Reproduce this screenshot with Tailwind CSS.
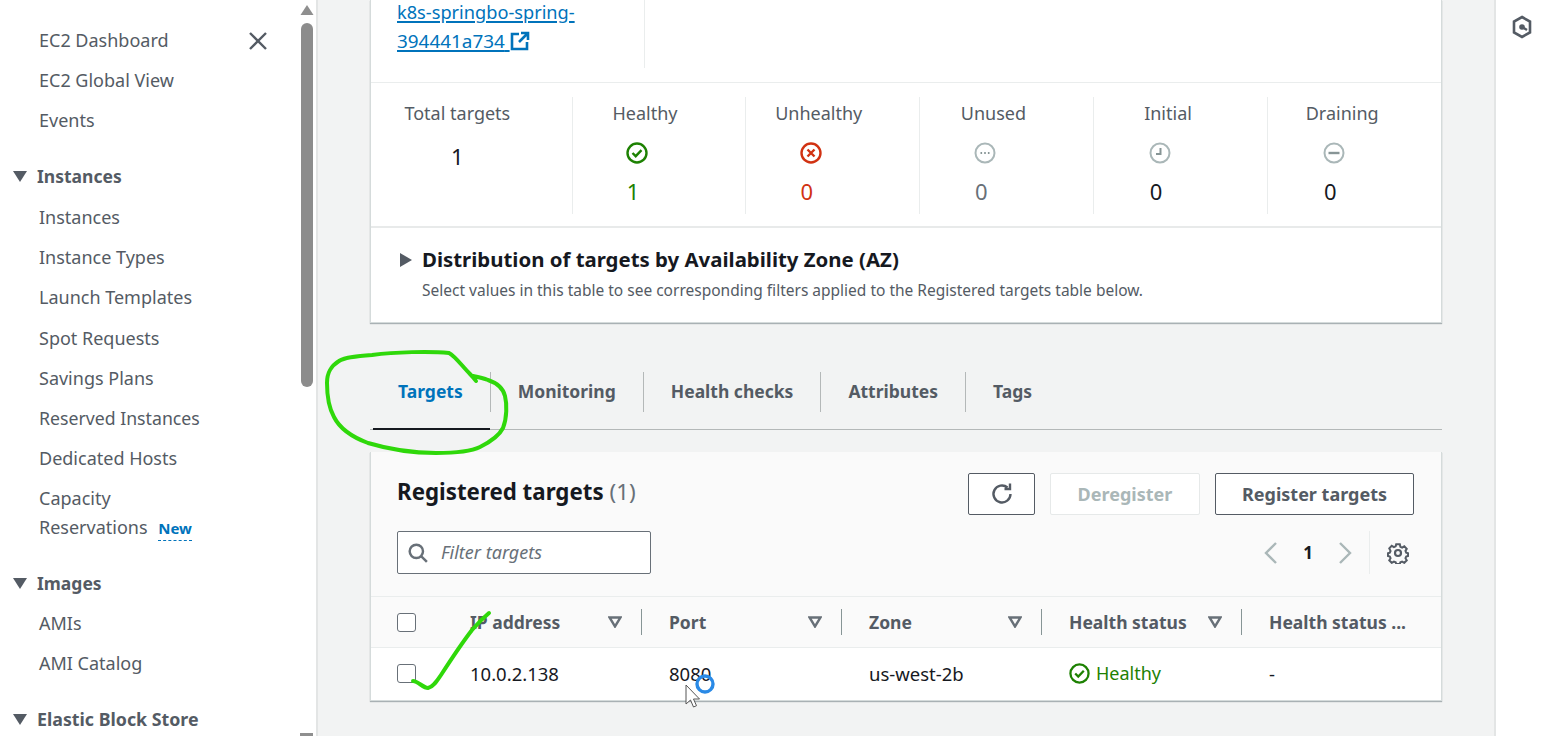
<!DOCTYPE html>
<html lang="en">
<head>
<meta charset="UTF-8" />
<title>Target group - EC2</title>
<script src="https://cdn.jsdelivr.net/npm/@tailwindcss/browser@4"></script>
</head>

<body class="relative flex h-[736px] overflow-hidden bg-[#f2f3f3] font-['Noto_Sans',sans-serif] text-[#16191f]">

<!-- Side nav -->
<aside class="relative w-[318px] h-full shrink-0 overflow-hidden bg-white border-r-2 border-[#e3e5e5] pt-5 text-[18px] text-[#545b64]">
  <nav>
    <a class="flex h-10 items-center pl-[39px]">EC2 Dashboard</a>
    <a class="flex h-10 items-center pl-[39px]">EC2 Global View</a>
    <a class="flex h-10 items-center pl-[39px]">Events</a>

    <div class="mt-4 mb-px flex h-10 items-center gap-[10px] pl-[13px] text-[17.5px] font-bold">
      <svg width="14" height="11" viewBox="0 0 14 11"><path d="M0 0h14L7 11z" fill="#545b64"/></svg>Instances
    </div>
    <a class="flex h-10 items-center pl-[39px]">Instances</a>
    <a class="flex h-10 items-center pl-[39px]">Instance Types</a>
    <a class="mb-px flex h-10 items-center pl-[39px]">Launch Templates</a>
    <a class="flex h-10 items-center pl-[39px]">Spot Requests</a>
    <a class="flex h-10 items-center pl-[39px]">Savings Plans</a>
    <a class="flex h-10 items-center pl-[39px] text-[17.7px]">Reserved Instances</a>
    <a class="flex h-10 items-center pl-[39px]">Dedicated Hosts</a>
    <a class="block pt-[6px] pb-[4px] pl-[39px] leading-[29px]">Capacity<br>Reservations <span class="ml-1.5 border-b border-dashed border-[#0073bb] pb-0.5 text-[15px] font-bold text-[#0073bb]">New</span></a>

    <div class="mt-4 flex h-10 items-center gap-[10px] pl-[13px] text-[17.5px] font-bold">
      <svg width="14" height="11" viewBox="0 0 14 11"><path d="M0 0h14L7 11z" fill="#545b64"/></svg>Images
    </div>
    <a class="flex h-10 items-center pl-[39px]">AMIs</a>
    <a class="flex h-10 items-center pl-[39px]">AMI Catalog</a>

    <div class="mt-4 flex h-10 items-center gap-[10px] pl-[13px] text-[17.8px] font-bold">
      <svg width="14" height="11" viewBox="0 0 14 11"><path d="M0 0h14L7 11z" fill="#545b64"/></svg>Elastic Block Store
    </div>
  </nav>

  <svg class="absolute left-[248px] top-[31px]" width="20" height="20" viewBox="0 0 20 20"><path d="M2 2l16 16M18 2L2 18" stroke="#545b64" stroke-width="2.400" fill="none"/></svg>

  <!-- scrollbar -->
  <svg class="absolute left-[300px] top-[5px]" width="14" height="10" viewBox="0 0 14 10"><path d="M7 0l6.500 10H.5z" fill="#8f8f8f"/></svg>
  <div class="absolute left-[301px] top-[23px] h-[364px] w-3 rounded-md bg-[#8c8c8c]"></div>
  <div class="absolute left-[300px] top-[733px] h-[3px] w-[13px] bg-[#8f8f8f]"></div>
</aside>

<!-- Content -->
<main class="w-[1176px] shrink-0 pl-[52px] pr-[52px]">

  <!-- Details card -->
  <section class="h-[323px] bg-white border-x border-b border-[#d5dbdb] shadow-[0_1px_1px_rgba(0,28,36,0.3)]">
    <div class="h-[83px] border-b border-[#eaeded]">
      <div class="h-[68px] w-[274px] border-r border-[#eaeded] pl-[26px]">
        <a class="block w-[190px] -translate-y-[2px] text-[18.2px] leading-[29px] text-[#0073bb] underline decoration-2 underline-offset-2">k8s-springbo-spring-<br><span class="text-[18.9px]">394441a734</span> <svg class="inline -mt-1" width="20" height="20" viewBox="0 0 20 20" fill="none" stroke="#0073bb" stroke-width="2.600"><path d="M9 3H2v15h15v-7M11 2h7v7M18 2l-9 9"/></svg></a>
      </div>
    </div>

    <div class="flex h-[145px] border-b-2 border-[#e8eaea] pt-[14px] text-center text-[18px]">
      <div class="h-[117px] w-[202px] border-r border-[#eaeded] pl-[28px] pr-[56px] text-[#545b64]">
        <p class="leading-[32px]">Total targets</p>
        <p class="mt-[11px] text-[22px] leading-[32px] text-[#16191f]">1</p>
      </div>
      <div class="h-[117px] w-[174px] border-r border-[#eaeded] pr-7 text-[#545b64]">
        <p class="leading-[32px]">Healthy</p>
        <div class="mt-[13px] flex justify-center pr-4">
          <svg width="22" height="22" viewBox="0 0 22 22" fill="none" stroke="#1d8102" stroke-width="2.400"><circle cx="11" cy="11" r="9.500"/><path d="M6.500 11l3.200 3.200 5.800-6"/></svg>
        </div>
        <p class="mt-[11px] pr-6 text-[22px] leading-[32px] text-[#1d8102]">1</p>
      </div>
      <div class="h-[117px] w-[174px] border-r border-[#eaeded] pr-7 text-[#545b64]">
        <p class="leading-[32px]">Unhealthy</p>
        <div class="mt-[13px] flex justify-center pr-4">
          <svg width="22" height="22" viewBox="0 0 22 22" fill="none" stroke="#d13212" stroke-width="2.400"><circle cx="11" cy="11" r="9.500"/><path d="M7.500 7.500l7 7M14.500 7.500l-7 7"/></svg>
        </div>
        <p class="mt-[11px] pr-6 text-[22px] leading-[32px] text-[#d13212]">0</p>
      </div>
      <div class="h-[117px] w-[174px] border-r border-[#eaeded] pl-[2px] pr-7 text-[#545b64]">
        <p class="leading-[32px]">Unused</p>
        <div class="mt-[13px] flex justify-center pr-4">
          <svg width="22" height="22" viewBox="0 0 22 22" fill="none" stroke="#aab7b8" stroke-width="2"><circle cx="11" cy="11" r="9.500"/><path d="M6.500 11h1.600M10.200 11h1.600M13.900 11h1.600" stroke="#879596"/></svg>
        </div>
        <p class="mt-[11px] pr-6 text-[22px] leading-[32px] text-[#687078]">0</p>
      </div>
      <div class="h-[117px] w-[175px] border-r border-[#eaeded] pl-[3px] pr-7 text-[#545b64]">
        <p class="leading-[32px]">Initial</p>
        <div class="mt-[13px] flex justify-center pr-4">
          <svg width="22" height="22" viewBox="0 0 22 22" fill="none" stroke="#aab7b8" stroke-width="2"><circle cx="11" cy="11" r="9.500"/><path d="M11.500 6v6H7" stroke="#879596"/></svg>
        </div>
        <p class="mt-[11px] pr-6 text-[22px] leading-[32px] text-[#16191f]">0</p>
      </div>
      <div class="h-[117px] w-[173px] pl-[3px] pr-7 text-[#545b64]">
        <p class="leading-[32px]">Draining</p>
        <div class="mt-[13px] flex justify-center pr-4">
          <svg width="22" height="22" viewBox="0 0 22 22" fill="none" stroke="#aab7b8" stroke-width="2"><circle cx="11" cy="11" r="9.500"/><path d="M5.500 11h11" stroke="#879596" stroke-width="2.400"/></svg>
        </div>
        <p class="mt-[11px] pr-6 text-[22px] leading-[32px] text-[#16191f]">0</p>
      </div>
    </div>

    <div class="flex pl-[29px] pt-4">
      <svg class="mt-[9px] mr-[10px]" width="12" height="14" viewBox="0 0 12 14"><path d="M0 0l12 7-12 7z" fill="#545b64"/></svg>
      <div>
        <h2 class="text-[20.4px] font-bold leading-[30px]">Distribution of targets by Availability Zone (AZ)</h2>
        <p class="mt-px text-[15.5px] leading-[30px] text-[#545b64]">Select values in this table to see corresponding filters applied to the Registered targets table below.</p>
      </div>
    </div>
  </section>

  <!-- Tabs -->
  <div class="mt-[37px] flex h-[70px] border-b border-[#b4b8b8] text-[17.5px] font-bold text-[#545b64]">
    <div class="ml-[3px] -mb-px flex h-[70px] border-b-2 border-[#16191f] pl-[25px]">
      <a class="pr-[27px] pt-[12px] leading-[38px] text-[#0073bb]">Targets</a>
    </div>
    <div class="mt-3 h-10 border-l border-[#b4b8b8] px-[27px] leading-[38px]">Monitoring</div>
    <div class="mt-3 h-10 border-l border-[#b4b8b8] px-[27px] leading-[38px]">Health checks</div>
    <div class="mt-3 h-10 border-l border-[#b4b8b8] px-[27px] leading-[38px]">Attributes</div>
    <div class="mt-3 h-10 border-l border-[#b4b8b8] px-[27px] leading-[38px]">Tags</div>
  </div>

  <!-- Registered targets card -->
  <section class="mt-[22px] h-[249px] bg-[#fafafa] border-x border-b border-[#d5dbdb] shadow-[0_1px_1px_rgba(0,28,36,0.3)]">
    <div class="flex h-[79px] items-start pl-[26px] pr-[27px] pt-[21px]">
      <h2 class="mt-[2px] text-[22.3px] font-bold leading-[34px]">Registered targets <span class="font-normal text-[#687078]">(1)</span></h2>
      <div class="ml-auto flex gap-[15px]">
        <button class="flex h-[42px] w-[67px] items-center justify-center rounded-[2px] border border-[#545b64] bg-white">
          <svg width="24" height="24" viewBox="0 0 24 24" fill="none" stroke="#545b64" stroke-width="2.400"><path d="M20.500 12a8.500 8.500 0 1 1-3-6.500M20 1.500V7h-5.500"/></svg>
        </button>
        <button class="h-[42px] w-[150px] rounded-[2px] border border-[#e6e9e9] bg-white text-[18px] font-bold text-[#aab7b8]">Deregister</button>
        <button class="h-[42px] w-[199px] rounded-[2px] border border-[#545b64] bg-white text-[18px] font-bold text-[#545b64]">Register targets</button>
      </div>
    </div>

    <div class="flex h-[65px] items-start pl-[26px]">
      <div class="flex h-[43px] w-[254px] items-center gap-[13px] rounded-[2px] border border-[#687078] bg-white pl-[10px] text-[18px] italic text-[#687078]">
        <svg width="20" height="20" viewBox="0 0 18 18" fill="none" stroke="#687078" stroke-width="2.200"><circle cx="7.500" cy="7.500" r="6"/><path d="M12 12l5 5"/></svg>
        Filter targets
      </div>
      <div class="ml-[612px] flex h-[43px] items-center">
        <svg width="16" height="24" viewBox="0 0 16 24" fill="none" stroke="#aab7b8" stroke-width="2.400"><path d="M13 2L3 12l10 10"/></svg>
        <span class="w-[58px] text-center text-[17px] font-bold">1</span>
        <svg width="16" height="24" viewBox="0 0 16 24" fill="none" stroke="#aab7b8" stroke-width="2.400"><path d="M3 2l10 10L3 22"/></svg>
        <div class="ml-4 flex h-[43px] w-[44px] items-center justify-end border-l border-[#eaeded] pr-1">
          <svg width="22" height="22" viewBox="0 0 22 22" fill="none" stroke="#545b64" stroke-width="2.200"><circle cx="11" cy="11" r="3"/><path d="M9 1.500h4l.6 2.700 1.900.8 2.400-1.400 2.700 2.800-1.400 2.300.8 1.900 2 .6v3l-2 .6-.8 1.900 1.400 2.300-2.700 2.800-2.400-1.400-1.900.8-.6 1.800H9l-.6-1.800-1.900-.8-2.400 1.400-2.700-2.800 1.400-2.300-.8-1.900-2-.6v-3l2-.6.8-1.900L1.400 5.900l2.700-2.800 2.400 1.400 1.900-.8z" transform="translate(1 1) scale(.91)"/></svg>
        </div>
      </div>
    </div>

    <table class="w-full table-fixed border-t border-[#eaeded] text-[18.5px]">
      <thead class="text-left text-[17.5px] font-bold text-[#545b64]">
        <tr class="h-[51px] border-b border-[#eaeded]">
          <th class="w-[71px] pl-[26px]"><div class="h-[19px] w-[19px] rounded-[3px] border border-[#687078] bg-white"></div></th>
          <th class="w-[200px] pl-[28px]"><div class="flex h-[26px] items-center justify-between border-r border-[#879596] pr-[19px]">IP address<svg width="14" height="12" viewBox="0 0 14 12" fill="none" stroke="#687078" stroke-width="2.400"><path d="M1.500 1.500h11L7 10.500z"/></svg></div></th>
          <th class="w-[200px] pl-[27px]"><div class="flex h-[26px] items-center justify-between border-r border-[#879596] pr-[19px]">Port<svg width="14" height="12" viewBox="0 0 14 12" fill="none" stroke="#687078" stroke-width="2.400"><path d="M1.500 1.500h11L7 10.500z"/></svg></div></th>
          <th class="w-[200px] pl-[27px]"><div class="flex h-[26px] items-center justify-between border-r border-[#879596] pr-[19px]">Zone<svg width="14" height="12" viewBox="0 0 14 12" fill="none" stroke="#687078" stroke-width="2.400"><path d="M1.500 1.500h11L7 10.500z"/></svg></div></th>
          <th class="w-[200px] pl-[27px]"><div class="flex h-[26px] items-center justify-between border-r border-[#879596] pr-[19px]">Health status<svg width="14" height="12" viewBox="0 0 14 12" fill="none" stroke="#687078" stroke-width="2.400"><path d="M1.500 1.500h11L7 10.500z"/></svg></div></th>
          <th class="pl-[27px]">Health status ...</th>
        </tr>
      </thead>
      <tbody class="bg-white">
        <tr class="h-[52px]">
          <td class="pl-[26px]"><div class="h-[19px] w-[19px] rounded-[3px] border border-[#687078] bg-white"></div></td>
          <td class="pl-[28px]">10.0.2.138</td>
          <td class="pl-[27px]">8080</td>
          <td class="pl-[27px]">us-west-2b</td>
          <td class="pl-[27px] text-[18px] text-[#1d8102]">
            <div class="flex items-center gap-[6px]"><svg width="21" height="21" viewBox="0 0 22 22" fill="none" stroke="#1d8102" stroke-width="2.400"><circle cx="11" cy="11" r="9.500"/><path d="M6.500 11l3.200 3.200 5.800-6"/></svg>Healthy</div>
          </td>
          <td class="pl-[27px]">-</td>
        </tr>
      </tbody>
    </table>
  </section>
</main>

<!-- Right rail -->
<aside class="flex-1 h-full bg-white border-l-2 border-[#e3e5e5] pl-[15px] pt-[15px]">
  <svg width="22" height="24" viewBox="0 0 22 24" fill="none" stroke="#545b64" stroke-width="2.600"><path d="M11 2l8 4.600v10.800L11 22l-8-4.600V6.600z"/><circle cx="11" cy="12" r="2.800" fill="#545b64" stroke="none"/><path d="M11 12l5 3" stroke-width="2.400"/></svg>
</aside>

<!-- Marker annotations drawn over the page -->
<svg class="pointer-events-none absolute left-0 top-0" width="1546" height="736" viewBox="0 0 1546 736" fill="none">
  <path d="M476 381C474 378 472 376 470 374C462 366 455 356 449 353C430 351 395 352 372 355C358 356 345 357 339 361C331 366 327 372 327 383C327 396 329 408 334 417C340 429 352 437 368 443C388 449 410 453 436 453C454 453 470 452 480 447C490 442 499 436 503 428C507 418 507 404 505 396C503 388 497 383 488 380C483 378 478 377 473 376" stroke="#2fd80a" stroke-width="4" stroke-linecap="round"/>
  <path d="M413 681C418 681 423 688 428 688C433 687 437 681 441 675C452 658 462 643 472 630C478 623 483 618 489 613" stroke="#2fd80a" stroke-width="4" stroke-linecap="round"/>
  <circle cx="705" cy="684" r="8" stroke="#2a8ae6" stroke-width="3.400"/>
  <path d="M686 685v19l4.500-4 3 7 3-1.300-3-6.700 6 0z" fill="#fff" stroke="#555" stroke-width="1"/>
</svg>

</body>
</html>
